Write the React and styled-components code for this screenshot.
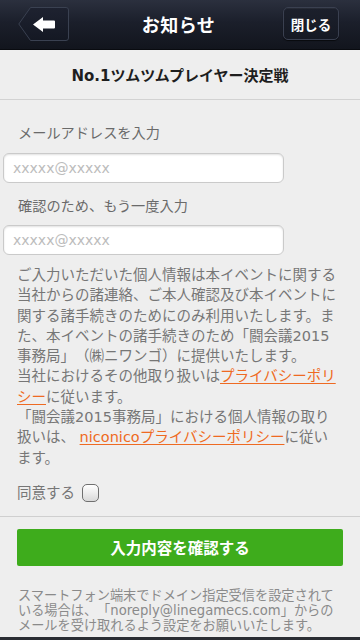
import React from "react";
import styled, { createGlobalStyle } from "styled-components";

const Global = createGlobalStyle`
  html, body { margin: 0; padding: 0; background: #eeeeee; }
  body {
    font-family: "DejaVu Sans", "Noto Sans CJK JP", sans-serif;
    text-spacing-trim: space-all;
  }
  * { box-sizing: border-box; }
`;

const Page = styled.div`
  width: 360px;
  height: 640px;
  overflow: hidden;
  display: flex;
  flex-direction: column;
  background: #eeeeee;
`;

const Header = styled.header`
  height: 50px;
  flex: none;
  display: grid;
  grid-template-columns: 1fr auto 1fr;
  align-items: center;
  padding: 0 21px 2px 18px;
  background: linear-gradient(#2b303e 0%, #1b1f2b 45%, #12151d 100%);
  border-bottom: 1px solid #090b10;
`;

const BackButton = styled.button`
  justify-self: start;
  width: 51px;
  height: 34px;
  padding: 0;
  border: 0;
  background: none;
  display: block;
  svg { display: block; }
`;

const HeaderTitle = styled.h1`
  margin: 0;
  color: #ffffff;
  font-size: 18px;
  font-weight: 700;
  letter-spacing: 0.5px;
`;

const CloseButton = styled.button`
  justify-self: end;
  width: 56px;
  height: 33px;
  border-radius: 5px;
  border: 1px solid #3a4050;
  background: linear-gradient(#1c202c, #151923);
  box-shadow: 0 1px 1px rgba(0,0,0,0.6), inset 0 1px 0 rgba(255,255,255,0.05);
  color: #ffffff;
  font-family: inherit;
  font-size: 13.5px;
  font-weight: 700;
  padding: 0;
`;

const SubHeader = styled.div`
  height: 50px;
  flex: none;
  display: flex;
  align-items: center;
  justify-content: center;
  border-bottom: 1px solid #d2d2d2;
  color: #1e1e1e;
  font-size: 15px;
  font-weight: 700;
  padding-bottom: 1px;
`;

const Form = styled.section`
  padding-top: 23px;
  display: flex;
  flex-direction: column;
`;

const Label = styled.div`
  padding-left: 18px;
  color: #6a6a6a;
  font-size: 14.2px;
  line-height: 20px;
  margin-top: ${(p) => p.$top || 0}px;
  margin-bottom: ${(p) => p.$bottom || 0}px;
`;

const Input = styled.input`
  margin-left: 3px;
  width: 281px;
  height: 30px;
  border: 1px solid #cacaca;
  border-radius: 6px;
  background: #ffffff;
  box-shadow: inset 0 1px 2px rgba(0,0,0,0.12);
  padding: 0 0 0 9px;
  font-family: "DejaVu Sans", "Noto Sans CJK JP", sans-serif;
  font-size: 14px;
  color: #333;
  outline: none;
  &::placeholder { color: #bcbcbc; }
`;

const Notice = styled.p`
  margin: 10px 0 0;
  padding-left: 17px;
  color: #767676;
  font-size: 14.5px;
  line-height: 20.3px;
  white-space: nowrap;
`;

const Link = styled.a`
  color: #ee6a22;
  text-decoration: underline;
  text-underline-offset: 2px;
`;

const AgreeRow = styled.label`
  margin-top: 14px;
  padding-left: 17px;
  height: 20px;
  display: flex;
  align-items: center;
  gap: 7px;
  color: #767676;
  font-size: 14.5px;
`;

const Checkbox = styled.span`
  width: 17px;
  height: 18px;
  border-radius: 5px;
  border: 1px solid #6f6f6f;
  background: linear-gradient(#ffffff, #d9d9d9);
  margin-top: 2px;
`;

const Bottom = styled.section`
  margin-top: 14px;
  border-top: 1px solid #cfcfcf;
  padding: 12px 17px 0;
  display: flex;
  flex-direction: column;
`;

const SubmitButton = styled.button`
  height: 37px;
  width: 100%;
  border: 0;
  border-radius: 2px;
  background: #3eac1c;
  color: #ffffff;
  font-family: inherit;
  font-size: 15.5px;
  font-weight: 700;
  padding: 0;
`;

const FootNote = styled.p`
  margin: 22px 0 0;
  padding-left: 1px;
  color: #8a8a8a;
  font-size: 13.2px;
  line-height: 15px;
  white-space: nowrap;
`;

const BottomBar = styled.div`
  margin-top: auto;
  height: 3px;
  flex: none;
  background: #2a2d33;
`;

const BackShape = () => (
  <svg width="51" height="34" viewBox="0 0 51 34">
    <defs>
      <linearGradient id="bk" x1="0" y1="0" x2="0" y2="1">
        <stop offset="0" stopColor="#1e2230" />
        <stop offset="1" stopColor="#141823" />
      </linearGradient>
    </defs>
    <path
      d="M12.5 0.5 H48 Q50.5 0.5 50.5 3 V31 Q50.5 33.5 48 33.5 H12.5 L0.8 17 Z"
      fill="url(#bk)"
      stroke="#3a4151"
      strokeWidth="1"
    />
    <path
      d="M15 17.5 L25 10 V13.5 H36 Q37 13.5 37 14.5 V20.5 Q37 21.5 36 21.5 H25 V25 Z"
      fill="#ffffff"
    />
  </svg>
);

export default function App() {
  return (
    <>
      <Global />
      <Page>
        <Header>
          <BackButton aria-label="戻る">
            <BackShape />
          </BackButton>
          <HeaderTitle>お知らせ</HeaderTitle>
          <CloseButton>閉じる</CloseButton>
        </Header>
        <SubHeader>No.1ツムツムプレイヤー決定戦</SubHeader>
        <Form>
          <Label $bottom={10}>メールアドレスを入力</Label>
          <Input placeholder="xxxxx@xxxxx" />
          <Label $top={13} $bottom={9}>確認のため、もう一度入力</Label>
          <Input placeholder="xxxxx@xxxxx" />
          <Notice>
            ご入力いただいた個人情報は本イベントに関する<br />
            当社からの諸連絡、ご本人確認及び本イベントに<br />
            関する諸手続きのためにのみ利用いたします。ま<br />
            た、本イベントの諸手続きのため「闘会議2015<br />
            事務局」（㈱ニワンゴ）に提供いたします。<br />
            当社におけるその他取り扱いは<Link>プライバシーポリ<br />シー</Link>に従います。<br />
            「闘会議2015事務局」における個人情報の取り<br />
            扱いは、 <Link>niconicoプライバシーポリシー</Link>に従い<br />
            ます。
          </Notice>
          <AgreeRow>
            同意する
            <Checkbox />
          </AgreeRow>
        </Form>
        <Bottom>
          <SubmitButton>入力内容を確認する</SubmitButton>
          <FootNote>
            スマートフォン端末でドメイン指定受信を設定されて<br />
            いる場合は、「noreply@linegamecs.com」からの<br />
            メールを受け取れるよう設定をお願いいたします。
          </FootNote>
        </Bottom>
        <BottomBar />
      </Page>
    </>
  );
}
